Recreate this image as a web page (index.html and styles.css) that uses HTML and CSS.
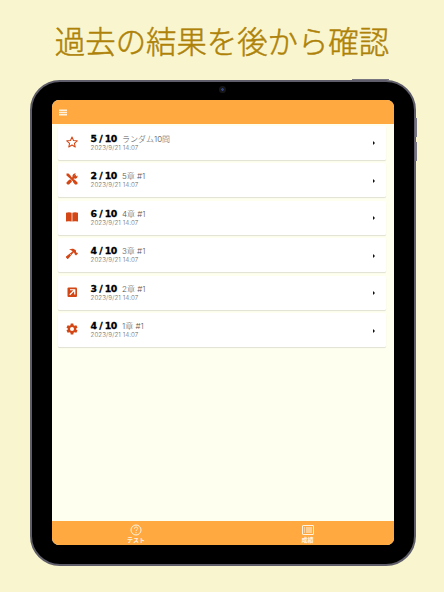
FILE: index.html
```
<!DOCTYPE html>
<html lang="ja">
<head>
<meta charset="utf-8">
<title>過去の結果</title>
<link rel="stylesheet" href="styles.css">
</head>
<body>
<h1 class="headline">過去の結果を後から確認</h1>
<div class="tablet">
  <span class="button power"></span>
  <span class="button volume-up"></span>
  <span class="button volume-down"></span>
  <span class="camera"></span>
  <div class="screen">
    <header class="topbar"><svg class="menu" viewBox="0 0 9 7"><path d="M0 1h9M0 3.500h9M0 6h9"/></svg></header>
    <main class="list">
      <article class="card">
        <svg class="icon" viewBox="0 0 24 24"><path fill="none" stroke="currentColor" stroke-width="2.100" stroke-linejoin="round" d="M12 2l3 7 7.500.6-5.700 5 1.700 7.400L12 18l-6.500 4 1.700-7.400-5.700-5L9 9z"/></svg>
        <div class="info"><div class="line"><b class="score">5 / 10</b><span class="name">ランダム10問</span></div><time class="date">2023/9/21 14:07</time></div><i class="arrow"></i>
      </article>
      <article class="card">
        <svg class="icon" viewBox="0 0 24 24"><path fill="none" stroke="currentColor" stroke-width="4" d="M6 6l15 15M20 5l-7 6M10 14l-7 7"/><path fill="currentColor" d="M1 1h4l4 4v4H6L1 5zM17 1h3l-3 4 2 3 4-3c1 5-3 7-6 6l-4-2c-1-4 1-7 4-8zM14 15l3-2 6 6v3l-2 1h-3l-4-5zM1 19l6-6 5 4-6 6H3l-2-2z"/></svg>
        <div class="info"><div class="line"><b class="score">2 / 10</b><span class="name">5章 #1</span></div><time class="date">2023/9/21 14:07</time></div><i class="arrow"></i>
      </article>
      <article class="card">
        <svg class="icon" viewBox="0 0 24 24"><path fill="currentColor" d="M0 3.500q6-2 11.300 0V21q-5.500-1.500-11.300 0zM12.700 3.500q5.300-2 11.300 0V21q-5.800-1.500-11.300 0z"/></svg>
        <div class="info"><div class="line"><b class="score">6 / 10</b><span class="name">4章 #1</span></div><time class="date">2023/9/21 14:07</time></div><i class="arrow"></i>
      </article>
      <article class="card">
        <svg class="icon" viewBox="0 0 24 24"><path fill="currentColor" d="M7 3c5-3 9-2 13 2v4l2 0 2 2-4 4-3-3v-2l-2-1-11 13H3l-3-3v-2L13 7c-1-2-3-3-6-3z"/><path stroke="#fff" stroke-width="1" d="M8 12l4 4"/></svg>
        <div class="info"><div class="line"><b class="score">4 / 10</b><span class="name">3章 #1</span></div><time class="date">2023/9/21 14:07</time></div><i class="arrow"></i>
      </article>
      <article class="card">
        <svg class="icon" viewBox="0 0 24 24"><rect x="3" y="3" width="19" height="19" rx="2" fill="currentColor"/><path fill="none" stroke="#fff" stroke-width="2.400" d="M8 7.500h9.500V17M17 8l-9.500 9.500"/></svg>
        <div class="info"><div class="line"><b class="score">3 / 10</b><span class="name">2章 #1</span></div><time class="date">2023/9/21 14:07</time></div><i class="arrow"></i>
      </article>
      <article class="card">
        <svg class="icon" viewBox="0 0 24 24"><path fill="currentColor" fill-rule="evenodd" d="M9.500 1h5l.700 3.500 2 1.200L20.600 4.500l2.500 4.300-2.700 2.200v2l2.700 2.200-2.500 4.300-3.400-1.200-2 1.200-.700 3.500h-5l-.700-3.500-2-1.200-3.400 1.200L.900 15.200 3.600 13v-2L.900 8.800l2.500-4.300 3.400 1.200 2-1.200zM12 8a4 4 0 100 8 4 4 0 000-8z"/></svg>
        <div class="info"><div class="line"><b class="score">4 / 10</b><span class="name">1章 #1</span></div><time class="date">2023/9/21 14:07</time></div><i class="arrow"></i>
      </article>
    </main>
    <nav class="tabs">
      <div class="tab"><svg class="tab-icon" viewBox="0 0 12 12"><circle cx="6" cy="6" r="5"/><path d="M4.300 4.700c0-2.200 3.400-2.200 3.400-.200C7.700 5.700 6 5.800 6 7.100M6 8.200v1"/></svg><span>テスト</span></div>
      <div class="tab active"><svg class="tab-icon" viewBox="0 0 12 12"><rect x=".5" y="1.500" width="11" height="9" rx=".5"/><path d="M2 4h1M4 4h6M2 6h1M4 6h6M2 8h1M4 8h6"/></svg><span>成績</span></div>
    </nav>
  </div>
</div>
</body>
</html>
```
FILE: styles.css
```
* { box-sizing: border-box; }
body {
  margin: 0;
  width: 444px;
  height: 592px;
  overflow: hidden;
  background: #f9f6cf;
  font-family: "Liberation Sans", "Noto Sans CJK JP", sans-serif;
}
.headline {
  margin: 0;
  height: 80px;
  text-align: center;
  white-space: nowrap;
  font: 300 30.400px/80px "Noto Sans CJK JP", sans-serif;
  color: #ae8208;
  -webkit-text-stroke: .5px #ae8208;
}
.tablet {
  position: relative;
  width: 386px;
  height: 486px;
  margin-left: 30px;
  padding: 18px 20px 19px;
  border: 2px solid #5e5d69;
  border-radius: 30px;
  background: #000;
}
.button { position: absolute; background: #77757f; }
.power { left: 320px; top: -3px; width: 37px; height: 1px; }
.volume-up, .volume-down { right: -3px; width: 2px; height: 19px; }
.volume-up { top: 36px; }
.volume-down { top: 60px; }
.camera {
  position: absolute;
  left: 187px;
  top: 4px;
  width: 7px;
  height: 7px;
  border-radius: 50%;
  background: radial-gradient(circle, #31417e 0 1px, #171717 1.500px);
}
.screen {
  display: flex;
  flex-direction: column;
  width: 342px;
  height: 445px;
  border-radius: 7px;
  overflow: hidden;
  background: #fffff0;
}
.topbar {
  display: flex;
  align-items: center;
  flex: none;
  height: 24.400px;
  padding-left: 7px;
  background: #ffa940;
}
.menu { width: 8px; height: 7px; fill: none; stroke: #fff2dd; stroke-width: 1.500; }
.list {
  display: flex;
  flex-direction: column;
  flex: 1;
  gap: 3.500px;
  padding: 1.300px 8px 0 6px;
}
.card {
  display: flex;
  align-items: center;
  height: 34px;
  padding: 0 11.500px 0 8px;
  border-radius: 1.500px;
  background: #fff;
  box-shadow: 0 1px 1px #0000001f;
}
.icon { flex: none; width: 12px; height: 12px; margin-top: -2px; color: #d34716; }
.info { flex: 1; margin-left: 12.500px; padding-bottom: 1px; }
.line { display: flex; align-items: baseline; height: 11px; line-height: 11px; white-space: nowrap; }
.score {
  width: 31.500px;
  font: bold 9.400px/11px "DejaVu Sans", sans-serif;
  word-spacing: -.2px;
  letter-spacing: -.450px;
  color: #000;
  -webkit-text-stroke: .3px #000;
}
.name { font: 300 8px/11px Inter, "Noto Sans CJK JP", sans-serif; color: #555; }
.date { display: block; font: 300 6.200px/8px Inter, sans-serif; letter-spacing: .1px; color: #666; }
.arrow {
  width: 0;
  height: 0;
  margin-top: 1px;
  border: 2px solid transparent;
  border-left: 2.500px solid #111;
  border-right: 0;
}
.tabs { display: flex; flex: none; height: 24px; background: #ffa940; }
.tab {
  display: flex;
  flex-direction: column;
  align-items: center;
  width: 50%;
  padding-top: 2.500px;
  padding-right: 3px;
  color: #fff4e3;
  font: bold 6px/8px "Noto Sans CJK JP", sans-serif;
}
.tab.active { padding-right: 2px; }
.tab-icon { width: 12px; height: 12px; fill: none; stroke: currentColor; stroke-width: 1; }
```
